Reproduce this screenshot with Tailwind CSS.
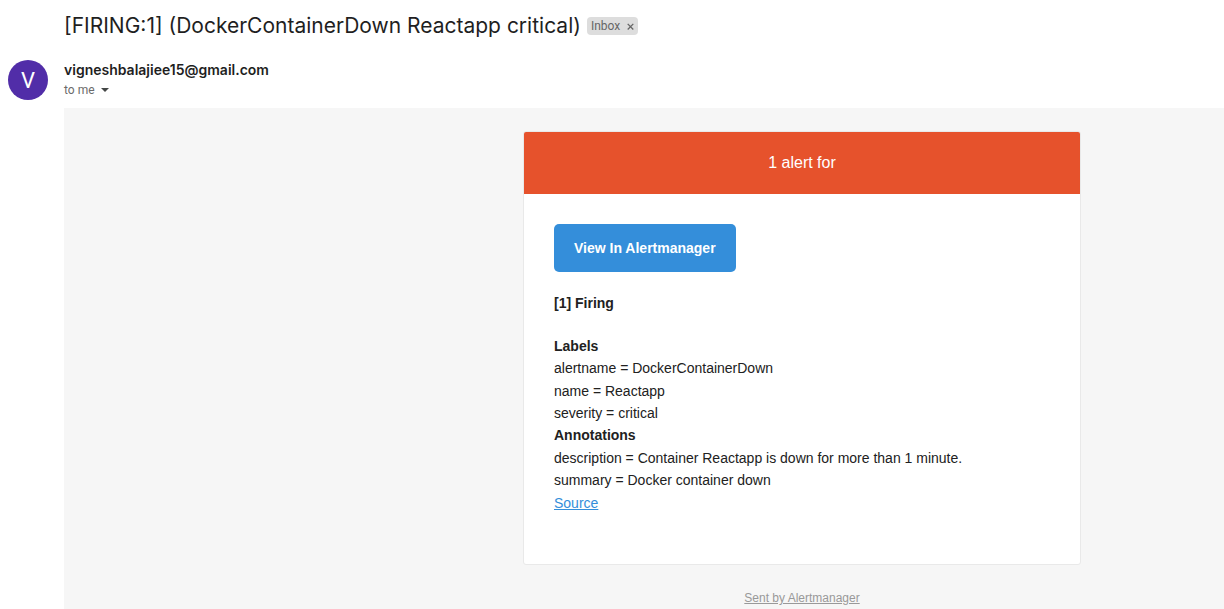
<!DOCTYPE html>
<html lang="en">
<head>
<meta charset="utf-8">
<meta name="viewport" content="width=device-width, initial-scale=1">
<title>[FIRING:1] (DockerContainerDown Reactapp critical)</title>
<script src="https://cdn.jsdelivr.net/npm/@tailwindcss/browser@4"></script>
</head>
<body class="flex min-h-screen flex-col overflow-x-hidden bg-white font-['Liberation_Sans',Arial,sans-serif] text-[#212121]">
  <header>
    <div class="flex items-center gap-1.5 pt-3 pl-16">
      <h1 class="font-['Inter',sans-serif] text-[21px] leading-7 font-normal text-[#1f1f1f]">[FIRING:1] (DockerContainerDown Reactapp critical)</h1>
      <div class="flex h-[18px] items-center gap-1.5 rounded bg-[#dddddd] px-1 font-['Roboto',sans-serif] text-xs text-[#666666]">
        <span>Inbox</span>
        <button type="button" aria-label="Remove label Inbox" class="flex h-4 w-2 items-center justify-center">
          <svg class="size-[7px]" viewBox="0 0 7 7" fill="none" stroke="#666666" stroke-width="1.3"><path d="M.7.9l5.6 5.6M6.3.9L.7 6.5"/></svg>
        </button>
      </div>
    </div>
    <div class="flex gap-4 px-2 pt-5 pb-2">
      <div class="flex size-10 shrink-0 items-center justify-center rounded-full bg-[#512da8] font-['Roboto',sans-serif] text-[22px] text-white">V</div>
      <div>
        <div class="font-['Inter',sans-serif] text-sm leading-5 font-semibold text-[#1f1f1f]">vigneshbalajiee15@gmail.com</div>
        <button type="button" class="flex items-center gap-1.5 font-['Roboto',sans-serif] text-xs leading-5 text-[#6b6b6b]">
          to me
          <svg class="h-1 w-2" viewBox="0 0 8 4" fill="#444746" aria-hidden="true"><path d="M0 0h8L4 4z"/></svg>
        </button>
      </div>
    </div>
  </header>

  <main class="ml-16 flex-1 bg-[#f6f6f6] pt-[23px] pl-[316px] text-sm">
    <article class="mx-auto max-w-[558px] overflow-hidden rounded-[3px] border border-[#e9e9e9] bg-white">
      <h2 class="bg-[#e6522c] p-5 text-center text-base leading-[22px] text-white">1 alert for</h2>
      <div class="px-[30px] pt-[30px] pb-[50px]">
        <a href="#" class="inline-flex h-12 items-center rounded-[5px] bg-[#348eda] px-5 font-bold text-white">View In Alertmanager</a>
        <h3 class="mt-5 leading-[22px] font-bold">[1] Firing</h3>
        <section class="mt-[21px] leading-[22px]">
          <h4 class="font-bold">Labels</h4>
          <p>alertname = DockerContainerDown</p>
          <p class="mt-px">name = Reactapp</p>
          <p>severity = critical</p>
        </section>
        <section class="leading-[22px]">
          <h4 class="font-bold">Annotations</h4>
          <p class="mt-px">description = Container Reactapp is down for more than 1 minute.</p>
          <p>summary = Docker container down</p>
        </section>
        <a href="#" class="mt-px inline-block leading-[22px] text-[#348eda] underline">Source</a>
      </div>
    </article>
    <footer class="pt-6 text-center text-xs leading-[18px]">
      <a href="#" class="text-[#999999] underline">Sent by Alertmanager</a>
    </footer>
  </main>
</body>
</html>
